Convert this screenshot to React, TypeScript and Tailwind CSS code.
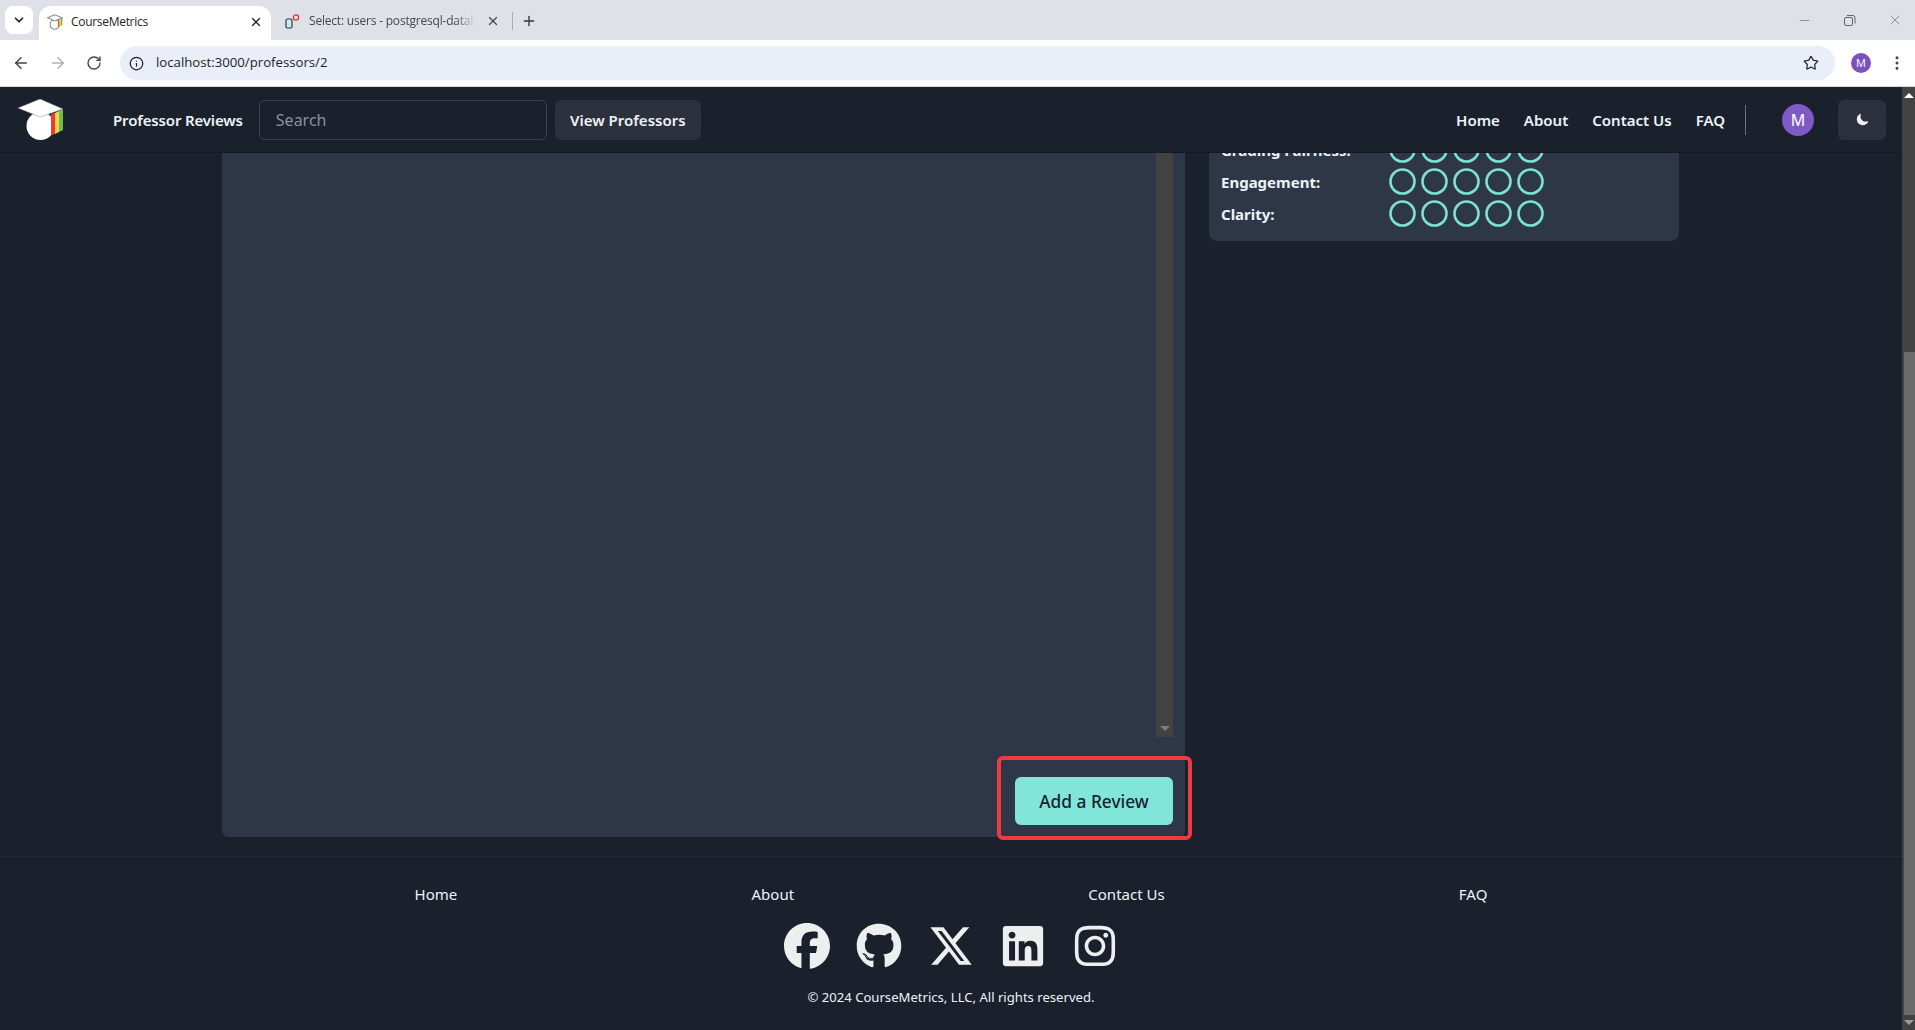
import { ArrowLeft, ArrowRight, ChevronDown, Info, Minus, MoreVertical, Plus, RotateCw, Star, X } from 'lucide-react'
import { FaFacebook, FaGithub, FaInstagram, FaLinkedin, FaXTwitter } from 'react-icons/fa6'
import { IoMoon } from 'react-icons/io5'

const font = 'font-["Noto_Sans","Open_Sans",sans-serif]'

function CapLogo() {
  return (
    <svg width={46} height={41} viewBox="0 0 46 41">
      <ellipse cx="22.5" cy="27" rx="14" ry="14" fill="#fff" />
      <polygon points="33,15 37,14 37,35 33,36" fill="#ee3a34" />
      <polygon points="37,14 41,12 41,33 37,35" fill="#f0d84c" />
      <polygon points="41,12 45,10 45,31 41,33" fill="#6dbf4b" />
      <polygon points="0,9 22,0 45,10 22,18" fill="#fff" stroke="#8a8a8a" strokeWidth="0.5" />
    </svg>
  )
}

// same cap, but outlined so it shows on the white tab
function TabIcon() {
  return (
    <svg width={16} height={16} viewBox="0 0 46 46">
      <ellipse cx="22" cy="30" rx="13" ry="14" fill="#fff" stroke="#8a8a8a" strokeWidth="3" />
      <polygon points="32,16 36,15 36,36 32,38" fill="#ee3a34" />
      <polygon points="36,15 40,13 40,34 36,36" fill="#f0d84c" />
      <polygon points="40,13 44,11 44,32 40,34" fill="#6dbf4b" />
      <polygon points="2,11 22,2 44,11 22,20" fill="#fff" stroke="#8a8a8a" strokeWidth="3" />
    </svg>
  )
}

function BrowserChrome() {
  return (
    <div className={`shrink-0 font-["Open_Sans",sans-serif]`}>
      <div className="h-10 bg-[#dee1e7] flex items-end pl-[5px]">
        <div className="w-7 h-7 mb-1.5 rounded-lg bg-white flex items-center justify-center">
          <ChevronDown size={14} strokeWidth={3} color="#222" />
        </div>
        <div className="ml-1.5 w-[232px] h-[34px] pb-[3px] bg-white rounded-t-xl flex items-center pl-2">
          <TabIcon />
          <span className="ml-2 text-xs text-[#222] tracking-[-0.3px]">CourseMetrics</span>
          <X size={14} strokeWidth={2.2} color="#222" className="ml-auto mr-2" />
        </div>
        <div className="h-[34px] pb-[4px] flex items-center pl-[14px]">
          <svg width="15" height="15" viewBox="0 0 15 15">
            <rect x="1" y="5" width="6" height="9" rx="1.5" fill="none" stroke="#0b4650" strokeWidth="1.2" />
            <circle cx="11" cy="3.5" r="2.6" fill="none" stroke="#d33" strokeWidth="1.3" />
          </svg>
          <span className="ml-[9px] w-[166px] overflow-hidden whitespace-nowrap text-xs text-[#45474a] tracking-[-0.2px] [mask-image:linear-gradient(to_right,black_88%,transparent)]">Select: users - postgresql-database</span>
          <X size={14} strokeWidth={2.2} color="#45474a" className="ml-[11px]" />
          <div className="ml-3 w-px h-[18px] bg-[#a9acb0]" />
          <Plus size={16} strokeWidth={2} color="#333" className="ml-2" />
        </div>
        <div className="ml-auto h-10 flex items-center text-[#666] gap-[31px] pr-3">
          <Minus size={15} strokeWidth={1} />
          <svg width="13" height="13" viewBox="0 0 13 13" fill="none" stroke="#666">
            <rect x="1.5" y="3.5" width="8" height="8" rx="1.5" />
            <path d="M4 1.5h6a2 2 0 0 1 2 2v6" />
          </svg>
          <X size={16} strokeWidth={1} />
        </div>
      </div>
      <div className="h-[47px] bg-white border-b border-[#d5d7da] flex items-center">
        <div className="w-[120px] flex items-center pl-3 gap-[19px] shrink-0">
          <ArrowLeft size={18} color="#444" />
          <ArrowRight size={18} color="#b0b2b5" />
          <RotateCw size={16} color="#444" />
        </div>
        <div className="w-[1715px] h-[34px] rounded-full bg-[#e9eef8] flex items-center pl-[8px] pr-4">
          <div className="w-[17px] flex justify-center"><Info size={15} color="#222" /></div>
          <span className="ml-[11px] text-[13.2px] text-[#1f1f1f]">localhost:3000/professors/2</span>
          <Star size={16} color="#333" className="ml-auto" />
        </div>
        <div className="ml-4 w-5 h-5 rounded-full bg-[#7b52bd] text-white text-[11px] flex items-center justify-center">M</div>
        <MoreVertical size={18} color="#444" className="ml-[17px]" />
      </div>
    </div>
  )
}

function Header() {
  return (
    <header className="h-[66px] shrink-0 bg-[#1a202c] border-b border-[#141923] flex items-center pl-[18px] pr-4 text-[#edf2f7]">
      <CapLogo />
      <span className="ml-[49px] pt-px text-[15px] font-semibold tracking-[-0.15px]">Professor Reviews</span>
      <input placeholder="Search" className="ml-4 w-[288px] h-10 px-4 pt-px rounded-md border border-[#3a4150] bg-transparent text-base outline-none placeholder:text-[#8b919c]" />
      <button className="ml-2 w-[146px] h-10 pt-px rounded-md bg-[#2c313d] text-[15px] font-semibold">View Professors</button>
      <nav className="ml-auto pt-px flex items-center gap-6 text-[15px] font-semibold">
        <span>Home</span>
        <span>About</span>
        <span>Contact Us</span>
        <span>FAQ</span>
      </nav>
      <div className="ml-5 w-px h-[30px] bg-[#6b7280]" />
      <div className="ml-9 w-8 h-8 rounded-full bg-[#805ac4] flex items-center justify-center text-base text-white">M</div>
      <button className="ml-6 w-12 h-10 rounded-md bg-[#2c313d] flex items-center justify-center"><IoMoon size={13} color="#f2f2f2" /></button>
    </header>
  )
}

function RatingRow({ label }: { label: string }) {
  return (
    <div className="h-8 flex items-center shrink-0">
      <span className="w-[168px] pt-[2px] text-[15px] font-bold text-[#edf2f7]">{label}</span>
      <div className="flex gap-[5px]">
        {[0, 1, 2, 3, 4].map(i => (
          <svg key={i} width="27" height="27" viewBox="0 0 27 27" fill="none" stroke="#7be3d4" strokeWidth="2.6">
            <circle cx="13.5" cy="13.5" r="12" />
          </svg>
        ))}
      </div>
    </div>
  )
}

function Content() {
  return (
    <div className="flex-1 min-h-0 flex pl-[222px] pb-[19px]">
      <div className="w-[963px] bg-[#2d3748] rounded-b-md flex flex-col items-end pr-3 pb-3 relative">
        <div className="w-[17px] flex-1 bg-[#424242] mb-10 flex flex-col justify-end items-center pb-[6px]">
          <div className="w-0 h-0 border-x-[5px] border-x-transparent border-t-[5px] border-t-[#7d7d7d]" />
        </div>
        <button className="w-[158px] h-12 pt-px rounded-md bg-[#81e6d9] text-[#1a202c] text-[17.3px] font-medium">Add a Review</button>
        <div className="absolute right-[-7px] bottom-[-3px] w-[195px] h-[84px] rounded-md border-[4px] border-[#ef3b3f]" />
      </div>
      <div className="ml-6 w-[470px] h-[88px] bg-[#2d3748] rounded-b-lg pl-3 pb-[12px] flex flex-col justify-end overflow-hidden">
        <RatingRow label="Grading Fairness:" />
        <RatingRow label="Engagement:" />
        <RatingRow label="Clarity:" />
      </div>
    </div>
  )
}

function Footer() {
  return (
    <footer className="h-[174px] shrink-0 border-t border-[#232a37] text-[#edf2f7] flex flex-col items-center">
      <div className="mt-[27px] w-[1367px] flex justify-around text-[15px] leading-5">
        <span>Home</span>
        <span>About</span>
        <span>Contact Us</span>
        <span>FAQ</span>
      </div>
      <div className="mt-[19px] flex items-center gap-[26px] text-[#edeeee]">
        <FaFacebook size={46} />
        <FaGithub size={46} />
        <FaXTwitter size={46} />
        <FaLinkedin size={46} />
        <FaInstagram size={46} />
      </div>
      <p className="mt-[18px] text-[13.1px] leading-5">© 2024 CourseMetrics, LLC, All rights reserved.</p>
    </footer>
  )
}

function PageScrollbar() {
  return (
    <div className="w-[13px] shrink-0 bg-[#424242] flex flex-col items-center pt-[6px] pb-[5px]">
      <div className="w-0 h-0 border-x-[5px] border-x-transparent border-b-[5px] border-b-white" />
      <div className="mt-[254px] ml-[2px] w-[11px] h-[663px] bg-[#6b6b6b]" />
      <div className="mt-auto w-0 h-0 border-x-[5px] border-x-transparent border-t-[5px] border-t-[#9a9a9a]" />
    </div>
  )
}

export default function App() {
  return (
    <div className={`h-screen flex flex-col overflow-hidden bg-[#1a202c] ${font}`}>
      <BrowserChrome />
      <div className="flex-1 min-h-0 flex">
        <div className="flex-1 min-w-0 flex flex-col">
          <Header />
          <Content />
          <Footer />
        </div>
        <PageScrollbar />
      </div>
    </div>
  )
}
